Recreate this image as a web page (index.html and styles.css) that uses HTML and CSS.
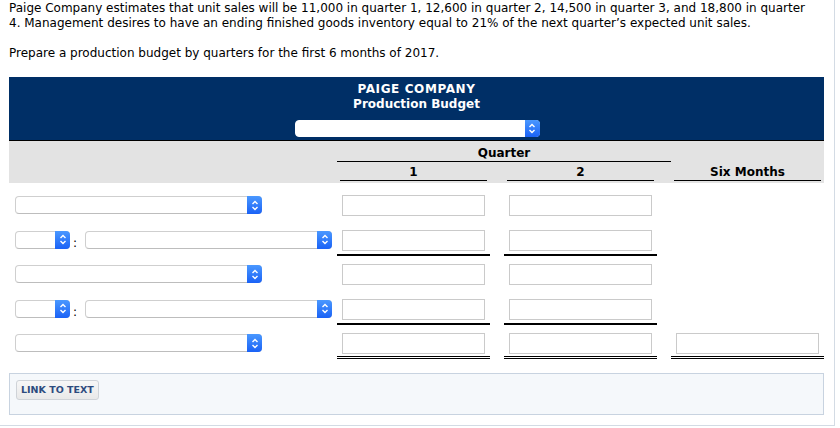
FILE: index.html
```html
<!DOCTYPE html>
<html>
<head>
<meta charset="utf-8">
<link rel="stylesheet" href="styles.css">
</head>
<body>
<div class="page">
  <p class="intro">Paige Company estimates that unit sales will be 11,000 in quarter 1, 12,600 in quarter 2, 14,500 in quarter 3, and 18,800 in quarter 4. Management desires to have an ending finished goods inventory equal to 21% of the next quarter’s expected unit sales.</p>
  <p class="intro second">Prepare a production budget by quarters for the first 6 months of 2017.</p>

  <div class="budget">
    <div class="title">
      <div class="title-line caps">PAIGE COMPANY</div>
      <div class="title-line">Production Budget</div>
      <div class="sel sel-head"><span class="btn"><svg width="8" height="11" viewBox="0 0 8 11"><path d="M1.5 4 L4 1.5 L6.5 4 M1.5 7 L4 9.5 L6.5 7" fill="none" stroke="#fff" stroke-width="1.4"/></svg></span></div>
    </div>
    <div class="colhead">
      <div class="quarter">Quarter</div>
      <div class="headrow">
        <div class="hlabel"></div>
        <div class="hcell">1</div>
        <div class="hcell">2</div>
        <div class="hcell">Six Months</div>
      </div>
    </div>

    <div class="rows">
      <div class="row">
        <div class="label"><div class="sel sel-long"><span class="btn"><svg width="8" height="11" viewBox="0 0 8 11"><path d="M1.5 4 L4 1.5 L6.5 4 M1.5 7 L4 9.5 L6.5 7" fill="none" stroke="#fff" stroke-width="1.4"/></svg></span></div></div>
        <div class="cell"><div class="inp"></div></div>
        <div class="cell"><div class="inp"></div></div>
        <div class="cell"></div>
      </div>

      <div class="row">
        <div class="label"><div class="sel sel-short"><span class="btn"><svg width="8" height="11" viewBox="0 0 8 11"><path d="M1.5 4 L4 1.5 L6.5 4 M1.5 7 L4 9.5 L6.5 7" fill="none" stroke="#fff" stroke-width="1.4"/></svg></span></div><span class="colon">:</span><div class="sel sel-long"><span class="btn"><svg width="8" height="11" viewBox="0 0 8 11"><path d="M1.5 4 L4 1.5 L6.5 4 M1.5 7 L4 9.5 L6.5 7" fill="none" stroke="#fff" stroke-width="1.4"/></svg></span></div></div>
        <div class="cell single"><div class="inp"></div></div>
        <div class="cell single"><div class="inp"></div></div>
        <div class="cell"></div>
      </div>

      <div class="row">
        <div class="label"><div class="sel sel-long"><span class="btn"><svg width="8" height="11" viewBox="0 0 8 11"><path d="M1.5 4 L4 1.5 L6.5 4 M1.5 7 L4 9.5 L6.5 7" fill="none" stroke="#fff" stroke-width="1.4"/></svg></span></div></div>
        <div class="cell"><div class="inp"></div></div>
        <div class="cell"><div class="inp"></div></div>
        <div class="cell"></div>
      </div>

      <div class="row">
        <div class="label"><div class="sel sel-short"><span class="btn"><svg width="8" height="11" viewBox="0 0 8 11"><path d="M1.5 4 L4 1.5 L6.5 4 M1.5 7 L4 9.5 L6.5 7" fill="none" stroke="#fff" stroke-width="1.4"/></svg></span></div><span class="colon">:</span><div class="sel sel-long"><span class="btn"><svg width="8" height="11" viewBox="0 0 8 11"><path d="M1.5 4 L4 1.5 L6.5 4 M1.5 7 L4 9.5 L6.5 7" fill="none" stroke="#fff" stroke-width="1.4"/></svg></span></div></div>
        <div class="cell single"><div class="inp"></div></div>
        <div class="cell single"><div class="inp"></div></div>
        <div class="cell"></div>
      </div>

      <div class="row">
        <div class="label"><div class="sel sel-long"><span class="btn"><svg width="8" height="11" viewBox="0 0 8 11"><path d="M1.5 4 L4 1.5 L6.5 4 M1.5 7 L4 9.5 L6.5 7" fill="none" stroke="#fff" stroke-width="1.4"/></svg></span></div></div>
        <div class="cell double"><div class="inp"></div></div>
        <div class="cell double"><div class="inp"></div></div>
        <div class="cell double"><div class="inp"></div></div>
      </div>
    </div>
  </div>

  <div class="links">
    <span class="linkbtn">LINK TO TEXT</span>
  </div>
</div>
</body>
</html>
```

FILE: styles.css
```css
html, body {
  margin: 0;
  padding: 0;
  background: #fff;
}
body {
  font-family: "DejaVu Sans", Verdana, sans-serif;
  font-size: 12px;
  color: #000;
}
.page {
  width: 825px;
  height: 424px;
  padding: 1px 0 0 9px;
  border-right: 1px solid #d3dbe4;
  border-bottom: 1px solid #d3dbe4;
}
.intro {
  margin: 0;
  line-height: 15px;
  width: 810px;
}
.intro.second {
  margin-top: 15px;
}
.budget {
  width: 815px;
  margin-top: 16px;
}
.title {
  background: #002f66;
  color: #fff;
  font-weight: bold;
  text-align: center;
  height: 64px;
  padding-top: 5px;
  box-sizing: border-box;
  border-bottom: 1px solid #000;
  display: flex;
  flex-direction: column;
  align-items: center;
}
.title-line {
  line-height: 15px;
}
.title-line.caps {
  letter-spacing: 0.6px;
}
.sel {
  position: relative;
  flex: none;
  height: 18px;
  box-sizing: border-box;
  background: #fff;
  border: 1px solid #cfcfcf;
  border-bottom-color: #bdbdbd;
  border-radius: 4px;
}
.sel .btn {
  position: absolute;
  right: -1px;
  top: -1px;
  bottom: -1px;
  width: 15px;
  border-radius: 0 4px 4px 0;
  background: linear-gradient(#4a98ff, #1a62f6);
  display: flex;
  align-items: center;
  justify-content: center;
}
.sel-head {
  width: 245px;
  height: 17px;
  margin-top: 8px;
  margin-left: 1px;
  border-color: #fff;
}
.sel-long {
  width: 247px;
}
.sel-short {
  width: 55px;
}
.colon {
  flex: none;
  width: 15px;
  padding-left: 3px;
  box-sizing: border-box;
  line-height: 12px;
}
.colhead {
  background: #e3e3e3;
  height: 42px;
  font-weight: bold;
  padding-top: 5px;
  box-sizing: border-box;
}
.quarter {
  margin-left: 328px;
  width: 334px;
  text-align: center;
  line-height: 15px;
  border-bottom: 1px solid #000;
}
.headrow {
  display: grid;
  grid-template-columns: 314px 153px 153px 153px;
  column-gap: 14px;
  margin-top: 3px;
}
.hcell {
  text-align: center;
  line-height: 15px;
  margin: 0 3px;
  border-bottom: 1px solid #000;
}
.rows {
  padding-top: 11px;
}
.row {
  display: grid;
  grid-template-columns: 314px 153px 153px 153px;
  column-gap: 14px;
  height: 34.5px;
}
.label {
  display: flex;
  align-items: flex-end;
  align-self: start;
  height: 18px;
  margin-top: 2px;
  padding-left: 6px;
  min-width: 0;
  overflow: visible;
}
.cell {
  height: 25px;
  box-sizing: border-box;
  padding: 1px 5px 0;
}
.cell.single {
  border-bottom: 2px solid #000;
  height: 27px;
}
.cell.double {
  border-bottom: 3px double #000;
  height: 27px;
}
.inp {
  height: 21px;
  box-sizing: border-box;
  border: 1px solid #cacaca;
  background: #fff;
}
.links {
  width: 815px;
  height: 42px;
  box-sizing: border-box;
  margin-top: 6px;
  background: #f5f8fb;
  border: 1px solid #c8d3e0;
  padding: 6px 0 0 6px;
}
.linkbtn {
  display: inline-block;
  height: 20px;
  line-height: 18px;
  box-sizing: border-box;
  padding: 0 4px;
  font-size: 9.5px;
  font-weight: bold;
  color: #2d4b7e;
  background: linear-gradient(#f7f7f7, #e9e9e9);
  border: 1px solid #cfd3d8;
  border-radius: 3px;
}
```
